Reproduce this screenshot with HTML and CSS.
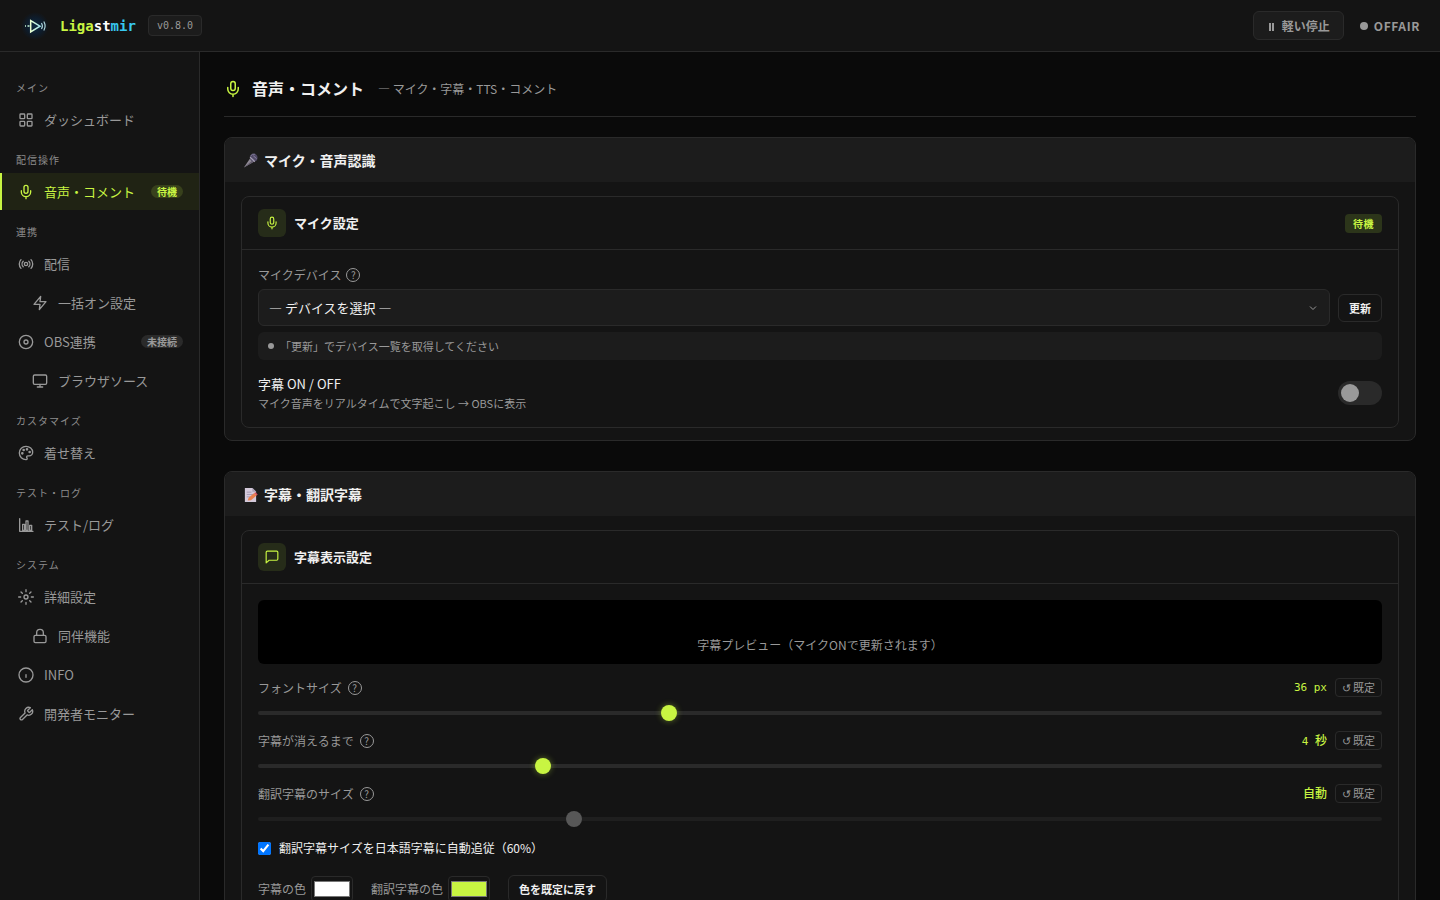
FILE: index.html
```html
<!DOCTYPE html>
<html lang="ja">
<head>
<meta charset="utf-8">
<title>Ligastmir</title>
<link rel="stylesheet" href="styles.css">
</head>
<body>
<svg class="defs" aria-hidden="true">
  <symbol id="mic" viewBox="0 0 24 24"><rect x="9" y="2" width="6" height="12" rx="3"/><path d="M5 10v2a7 7 0 0 0 14 0v-2M12 19v3"/></symbol>
</svg>
<header class="topbar">
  <svg class="logo" viewBox="0 0 32 32" aria-hidden="true">
    <defs>
      <radialGradient id="glow"><stop offset="0" stop-color="#0d2a42"/><stop offset=".6" stop-color="#0e1c2b"/><stop offset="1" stop-color="#141414"/></radialGradient>
      <linearGradient id="play" x1="0" x2="1"><stop offset="0" stop-color="#e9ffd0"/><stop offset="1" stop-color="#a5e8f0"/></linearGradient>
    </defs>
    <circle cx="15" cy="16" r="14" fill="url(#glow)"/>
    <path d="M10.700 10.500v11.500l9.300-5.800z" stroke="url(#play)" stroke-width="1.500"/>
    <path d="M5 16h1M7.500 16h2" stroke="#c8f8d8" stroke-width="1.300"/>
    <path d="M21.500 13q1.800 3 0 6M23.800 11.500q2.600 4.500 0 9" stroke="#b5dfe5" stroke-width="1.100"/>
  </svg>
  <span class="brand">Liga<span class="brand-mid">st</span><span class="brand-end">mir</span></span>
  <span class="version">v0.8.0</span>
  <button class="pause" type="button"><svg class="pause-icon" viewBox="0 0 8 10" aria-hidden="true"><path d="M2 2v8M5 2v8"/></svg>軽い停止</button>
  <span class="air"><i class="air-dot"></i>OFFAIR</span>
</header>
<div class="shell">
  <nav class="sidebar">
    <div class="nav-label">メイン</div>
    <a class="nav-item" href="#"><svg class="icon" viewBox="0 0 24 24"><rect x="3" y="3" width="7" height="7" rx="1"/><rect x="14" y="3" width="7" height="7" rx="1"/><rect x="3" y="14" width="7" height="7" rx="1"/><rect x="14" y="14" width="7" height="7" rx="1"/></svg>ダッシュボード</a>
    <div class="nav-label">配信操作</div>
    <a class="nav-item active" href="#"><svg class="icon"><use href="#mic"/></svg>音声・コメント<span class="pill">待機</span></a>
    <div class="nav-label">連携</div>
    <a class="nav-item" href="#"><svg class="icon" viewBox="0 0 24 24"><circle cx="12" cy="12" r="2.500"/><path d="M7.800 16.200a6 6 0 0 1 0-8.400M16.200 7.800a6 6 0 0 1 0 8.400M4.500 18.500a9.500 9.500 0 0 1 0-13M19.500 5.500a9.500 9.500 0 0 1 0 13"/></svg>配信</a>
    <a class="nav-item sub" href="#"><svg class="icon" viewBox="0 0 24 24"><path d="M13 2 3 14h9l-1 8 10-12h-9z"/></svg>一括オン設定</a>
    <a class="nav-item" href="#"><svg class="icon" viewBox="0 0 24 24"><circle cx="12" cy="12" r="10"/><circle cx="12" cy="12" r="3"/></svg>OBS連携<span class="pill">未接続</span></a>
    <a class="nav-item sub" href="#"><svg class="icon" viewBox="0 0 24 24"><rect x="2" y="3" width="20" height="14" rx="2"/><path d="M8 21h8M12 17v4"/></svg>ブラウザソース</a>
    <div class="nav-label">カスタマイズ</div>
    <a class="nav-item" href="#"><svg class="icon" viewBox="0 0 24 24"><path d="M12 2a10 10 0 0 0 0 20c1.100 0 1.800-.8 1.800-1.800 0-.5-.2-.9-.5-1.200-.3-.3-.4-.7-.4-1.100 0-1 .8-1.700 1.700-1.700h2c3 0 5.400-2.500 5.400-5.500C22 6 17.500 2 12 2z"/><circle cx="13.500" cy="6.500" r="1"/><circle cx="17.500" cy="10.500" r="1"/><circle cx="8.500" cy="7.500" r="1"/><circle cx="6.500" cy="12.500" r="1"/></svg>着せ替え</a>
    <div class="nav-label">テスト・ログ</div>
    <a class="nav-item" href="#"><svg class="icon" viewBox="0 0 24 24"><path d="M2.500 2.500v19h20M7 11h3v9H7zM12 6h3v14h-3zM17.500 12.500h3V20h-3z"/></svg>テスト/ログ</a>
    <div class="nav-label">システム</div>
    <a class="nav-item" href="#"><svg class="icon" viewBox="0 0 24 24"><circle cx="12" cy="12" r="3"/><path d="M12 1v3M12 20v3M1 12h3M20 12h3M4.500 4.500l2 2M17.500 17.500l2 2M4.500 19.500l2-2M17.500 6.500l2-2"/></svg>詳細設定</a>
    <a class="nav-item sub" href="#"><svg class="icon" viewBox="0 0 24 24"><rect x="3" y="11" width="18" height="11" rx="2"/><path d="M7 11V7a5 5 0 0 1 10 0v4"/></svg>同伴機能</a>
    <a class="nav-item" href="#"><svg class="icon" viewBox="0 0 24 24"><circle cx="12" cy="12" r="10.500"/><path d="M12 11.500v4"/></svg>INFO</a>
    <a class="nav-item" href="#"><svg class="icon" viewBox="0 0 24 24"><path d="M14.700 6.300a1 1 0 0 0 0 1.400l1.600 1.600a1 1 0 0 0 1.400 0l3.800-3.800a6 6 0 0 1-7.900 7.900l-6.900 6.900a2.100 2.100 0 0 1-3-3l6.900-6.900a6 6 0 0 1 7.900-7.900z"/></svg>開発者モニター</a>
  </nav>
  <main class="main">
    <div class="page-head">
      <svg class="icon head-icon"><use href="#mic"/></svg>
      <h1>音声・コメント</h1>
      <span class="subtitle">— マイク・字幕・TTS・コメント</span>
    </div>

    <section class="panel">
      <h2 class="panel-head"><svg class="emoji" viewBox="0 0 16 16" aria-hidden="true"><path d="M1 15.500 8 5l4 4z" fill="#8f8995"/><path d="M1 15.500 10.500 7.500 12 9z" fill="#625b6c"/><circle cx="11.500" cy="5" r="4" fill="#514a66"/><path d="M8 3.500a4 4 0 0 1 5-2.200M9 5.500l3.500 3M11 3l3.500 3" fill="none" stroke="#8a82a5"/><path d="M7.500 4.500l5 5" stroke="#aaa3b5" stroke-width="1.200"/></svg>マイク・音声認識</h2>
      <div class="panel-body">
        <div class="card">
          <div class="card-head">
            <span class="tile"><svg class="icon small"><use href="#mic"/></svg></span>
            <h3>マイク設定</h3>
            <span class="badge">待機</span>
          </div>
          <div class="card-body">
            <div class="field-label"><label for="device">マイクデバイス</label><button class="help" type="button">?</button></div>
            <div class="device-row">
              <div class="select-wrap">
                <select id="device"><option>— デバイスを選択 —</option></select>
                <svg class="chevron" viewBox="0 0 8 8" aria-hidden="true"><path d="M1 2.500l3 3 3-3"/></svg>
              </div>
              <button class="btn" type="button">更新</button>
            </div>
            <div class="status"><i class="status-dot"></i>「更新」でデバイス一覧を取得してください</div>
            <div class="toggle-row">
              <label for="captions"><span class="toggle-title">字幕 ON / OFF</span><span class="toggle-sub">マイク音声をリアルタイムで文字起こし → OBSに表示</span></label>
              <input class="switch" id="captions" type="checkbox">
            </div>
          </div>
        </div>
      </div>
    </section>

    <section class="panel">
      <h2 class="panel-head"><svg class="emoji" viewBox="0 0 16 16" aria-hidden="true"><path d="M2 1h8l4 4v11H2z" fill="#d3c9da"/><path d="M10 1v4h4z" fill="#a99fb5"/><path d="M4 5.500h5M4 8h7M4 10.500h4" stroke="#a498b0"/><path d="M5 14.500l1-3 6-5 2.500 2.500-6 5z" fill="#e8804e"/><path d="M12 6.500l1.300-1 2.400 2.400-1.200 1.100z" fill="#d9505e"/></svg>字幕・翻訳字幕</h2>
      <div class="panel-body">
        <div class="card">
          <div class="card-head">
            <span class="tile"><svg class="icon small" viewBox="0 0 24 24"><path d="M22 15.500a2 2 0 0 1-2 2H7l-5 4.500V4a2 2 0 0 1 2-2h16a2 2 0 0 1 2 2z"/></svg></span>
            <h3>字幕表示設定</h3>
          </div>
          <div class="card-body">
            <div class="preview">字幕プレビュー（マイクONで更新されます）</div>
            <div class="slider-block">
              <div class="slider-row"><label for="size">フォントサイズ</label><button class="help" type="button">?</button><output class="value">36 px</output><button class="reset" type="button"><span>↺</span>既定</button></div>
              <input class="slider" id="size" type="range" min="20" max="64" value="36">
            </div>
            <div class="slider-block">
              <div class="slider-row"><label for="hide">字幕が消えるまで</label><button class="help" type="button">?</button><output class="value">4 <span class="kanji">秒</span></output><button class="reset" type="button"><span>↺</span>既定</button></div>
              <input class="slider" id="hide" type="range" min="2" max="10" value="4">
            </div>
            <div class="slider-block">
              <div class="slider-row"><label for="tsize">翻訳字幕のサイズ</label><button class="help" type="button">?</button><output class="value"><span class="kanji">自動</span></output><button class="reset" type="button"><span>↺</span>既定</button></div>
              <input class="slider" id="tsize" type="range" min="12" max="48" value="22" disabled>
            </div>
            <div class="check-row"><input id="follow" type="checkbox" checked><label for="follow">翻訳字幕サイズを日本語字幕に自動追従（60%）</label></div>
            <div class="color-row">
              <label class="color">字幕の色<input type="color" value="#ffffff"></label>
              <label class="color">翻訳字幕の色<input type="color" value="#c8f542"></label>
              <button class="btn" type="button">色を既定に戻す</button>
            </div>
          </div>
        </div>
      </div>
    </section>
  </main>
</div>
</body>
</html>
```

FILE: styles.css
```css
:root {
  --bg: #0a0a0a;
  --surface: #141414;
  --raised: #1c1c1c;
  --line: #2a2a2a;
  --text: #f0f0f0;
  --muted: #999;
  --accent: #c8f542;
  --sans: "Noto Sans CJK JP", sans-serif;
  --mono: "DejaVu Sans Mono", "Noto Sans CJK JP", monospace;
}
* { box-sizing: border-box; }
body {
  margin: 0;
  height: 100vh;
  display: flex;
  flex-direction: column;
  background: var(--bg);
  color: var(--text);
  font: 13px/20px var(--sans);
}
button, select, input { font-family: inherit; margin: 0; }
h1, h2, h3 { margin: 0; font-weight: 700; }
.defs { display: none; }

.icon {
  width: 16px;
  height: 16px;
  flex: none;
  fill: none;
  stroke: currentColor;
  stroke-width: 2;
  stroke-linecap: round;
  stroke-linejoin: round;
}
.icon.small { width: 14px; height: 14px; }

.topbar {
  flex: none;
  display: flex;
  align-items: center;
  height: 52px;
  padding: 0 20px;
  background: var(--surface);
  border-bottom: 1px solid var(--line);
}
.logo { width: 32px; height: 32px; fill: none; }
.brand {
  margin: 0 12px 0 8px;
  color: var(--accent);
  font: 700 14px/20px var(--mono);
}
.brand-mid { color: #fff; }
.brand-end { color: #38c8f0; }
.version {
  padding: 1px 8px;
  border: 1px solid var(--line);
  border-radius: 4px;
  background: var(--raised);
  color: var(--muted);
  font: 10px/17px var(--mono);
}
.pause {
  display: flex;
  align-items: center;
  gap: 6px;
  margin-left: auto;
  padding: 5px 13px 4px 14px;
  border: 1px solid var(--line);
  border-radius: 6px;
  background: var(--raised);
  color: var(--muted);
  font-size: 12px;
  font-weight: 700;
  line-height: 18px;
}
.pause-icon { width: 8px; height: 10px; fill: none; stroke: currentColor; stroke-width: 2; }
.air {
  display: flex;
  align-items: center;
  gap: 6px;
  margin-left: 16px;
  color: var(--muted);
  font-size: 12px;
  font-weight: 700;
  letter-spacing: .05em;
}
.air-dot { width: 8px; height: 8px; border-radius: 50%; background: var(--muted); }

.shell { flex: 1; min-height: 0; display: flex; }
.sidebar {
  flex: none;
  display: flex;
  flex-direction: column;
  width: 200px;
  padding-top: 15px;
  overflow-y: auto;
  scrollbar-width: none;
  background: var(--surface);
  border-right: 1px solid var(--line);
}
.nav-label {
  padding: 13px 16px 5px;
  color: #8c8c8c;
  font-size: 10px;
  line-height: 15px;
  letter-spacing: 1px;
}
.nav-item {
  display: flex;
  align-items: center;
  gap: 10px;
  margin: 1px 0;
  padding: 8px 16px;
  border-left: 2px solid transparent;
  color: var(--muted);
  font-size: 13px;
  line-height: 21px;
  text-decoration: none;
}
.nav-item.sub { padding-left: 30px; }
.nav-item.active {
  border-left-color: var(--accent);
  background: #202314;
  color: var(--accent);
}
.pill {
  margin-left: auto;
  padding: 0 6px;
  border-radius: 8px;
  background: var(--line);
  color: var(--muted);
  font-size: 10px;
  font-weight: 700;
  line-height: 13px;
}
.active .pill { background: #38411c; color: var(--accent); }

.main {
  flex: 1;
  min-width: 0;
  padding: 20px 24px;
  overflow-y: auto;
  scrollbar-width: none;
}
.page-head {
  display: flex;
  align-items: center;
  gap: 10px;
  margin-bottom: 20px;
  padding: 4px 0 15px;
  border-bottom: 1px solid var(--line);
}
.head-icon { width: 18px; height: 18px; color: var(--accent); }
h1 { font-size: 16px; line-height: 25px; }
.subtitle { margin-left: 4px; color: var(--muted); font-size: 12px; }

.panel {
  margin-bottom: 30px;
  border: 1px solid var(--line);
  border-radius: 8px;
  background: var(--surface);
  overflow: hidden;
}
.panel-head {
  display: flex;
  align-items: center;
  gap: 6px;
  padding: 12px 18px;
  background: var(--raised);
  font-size: 14px;
  line-height: 20px;
}
.emoji { width: 15px; height: 15px; }
.panel-body { padding: 14px 16px 12px; }
.card { border: 1px solid var(--line); border-radius: 8px; }
.card-head {
  display: flex;
  align-items: center;
  gap: 8px;
  padding: 12px 16px;
  border-bottom: 1px solid var(--line);
}
.tile {
  display: grid;
  place-items: center;
  width: 28px;
  height: 28px;
  border-radius: 6px;
  background: #262c19;
  color: var(--accent);
}
h3 { font-size: 13px; line-height: 20px; }
.badge {
  margin-left: auto;
  padding: 0 8px;
  border-radius: 4px;
  background: #2c351a;
  color: var(--accent);
  font-size: 10px;
  font-weight: 700;
  line-height: 19px;
  letter-spacing: .05em;
}
.card-body { padding: 16px; }
.card-body label { color: var(--muted); font-size: 12px; line-height: 18px; }
.field-label { display: flex; align-items: center; gap: 5px; margin-bottom: 5px; }
.help {
  width: 14px;
  height: 14px;
  padding: 0;
  border: 1px solid var(--muted);
  border-radius: 50%;
  background: none;
  color: var(--muted);
  font-size: 10px;
  line-height: 12px;
}
.device-row { display: flex; align-items: center; gap: 8px; }
.select-wrap { position: relative; flex: 1; display: flex; }
select {
  width: 100%;
  height: 37px;
  padding: 0 32px 0 10px;
  appearance: none;
  border: 1px solid var(--line);
  border-radius: 6px;
  background: var(--raised);
  color: var(--text);
  font-size: 13px;
}
.chevron {
  position: absolute;
  top: 15px;
  right: 13px;
  width: 8px;
  height: 8px;
  fill: none;
  stroke: var(--muted);
  pointer-events: none;
}
.btn {
  height: 28px;
  padding: 0 10px;
  border: 1px solid var(--line);
  border-radius: 6px;
  background: transparent;
  color: var(--text);
  font-size: 11px;
  font-weight: 700;
}
.status {
  display: flex;
  align-items: center;
  gap: 6px;
  margin: 6px 0 14px;
  padding: 5px 10px;
  border-radius: 6px;
  background: var(--raised);
  color: var(--muted);
  font-size: 11px;
  line-height: 18px;
}
.status-dot { width: 6px; height: 6px; border-radius: 50%; background: var(--muted); }
.toggle-row { display: flex; align-items: center; justify-content: space-between; margin-bottom: -1px; }
.toggle-title, .toggle-sub { display: block; }
.toggle-title { color: var(--text); font-size: 13px; line-height: 20px; }
.toggle-sub { font-size: 11px; line-height: 18px; }
.switch {
  display: flex;
  align-items: center;
  width: 44px;
  height: 24px;
  padding: 3px;
  appearance: none;
  border-radius: 12px;
  background: var(--line);
}
.switch::before { content: ""; width: 18px; height: 18px; border-radius: 50%; background: var(--muted); }
.switch:checked { justify-content: flex-end; background: var(--accent); }

.preview {
  height: 64px;
  margin-bottom: 14px;
  padding: 36px 16px 0;
  border-radius: 6px;
  background: #000;
  color: var(--muted);
  font-size: 12px;
  line-height: 18px;
  text-align: center;
}
.slider-block { display: flex; flex-direction: column; gap: 8px; margin-bottom: 10px; }
.slider-row { display: flex; align-items: center; gap: 6px; height: 19px; }
.value {
  margin: 0 2px 0 auto;
  color: var(--accent);
  font: 11px/18px var(--mono);
}
.kanji { font: 500 12px/18px var(--sans); }
.reset {
  display: flex;
  gap: 2px;
  padding: 0 6px;
  border: 1px solid var(--line);
  border-radius: 4px;
  background: transparent;
  color: var(--muted);
  font-size: 11px;
  line-height: 17px;
}
.slider {
  width: 100%;
  height: 16px;
  appearance: none;
  background: transparent;
}
.slider::-webkit-slider-runnable-track { height: 4px; border-radius: 2px; background: var(--line); }
.slider::-webkit-slider-thumb {
  width: 16px;
  height: 16px;
  margin-top: -6px;
  appearance: none;
  border-radius: 50%;
  background: var(--accent);
  box-shadow: 0 0 6px #c8f54266;
}
.slider:disabled { opacity: .5; }
.slider:disabled::-webkit-slider-thumb { background: var(--muted); box-shadow: none; }
.check-row { display: flex; align-items: center; gap: 8px; padding-top: 2px; }
.check-row input { width: 13px; height: 13px; }
.check-row label { color: var(--text); }
.color-row { display: flex; align-items: center; gap: 18px; margin-top: 18px; }
.color { display: flex; align-items: center; gap: 5px; }
.color input {
  width: 42px;
  height: 26px;
  padding: 0;
  border: 1px solid var(--line);
  border-radius: 4px;
  background: transparent;
}
```
